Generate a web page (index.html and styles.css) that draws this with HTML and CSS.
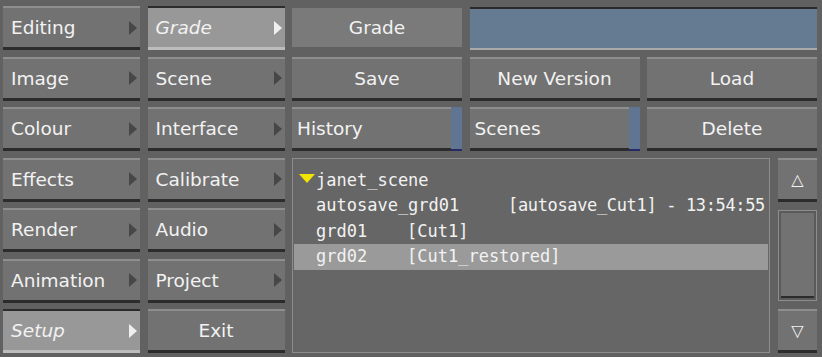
FILE: index.html
```html
<!DOCTYPE html>
<html lang="en">
<head>
    <meta charset="UTF-8">
    <title>Grade</title>
    <link rel="stylesheet" href="styles.css">
</head>
<body>

    <div class="panel">
        <!-- row 1 -->
        <div class="btn menu">Editing</div>
        <div class="btn menu active">Grade</div>
        <div class="label">Grade</div>
        <div class="field"></div>

        <!-- row 2 -->
        <div class="btn menu">Image</div>
        <div class="btn menu">Scene</div>
        <div class="btn center">Save</div>
        <div class="btn center">New Version</div>
        <div class="btn center">Load</div>

        <!-- row 3 -->
        <div class="btn menu">Colour</div>
        <div class="btn menu">Interface</div>
        <div class="btn toggle">History<span class="strip"></span></div>
        <div class="btn toggle">Scenes<span class="strip"></span></div>
        <div class="btn center">Delete</div>

        <!-- rows 4-7 -->
        <div class="btn menu">Effects</div>
        <div class="btn menu">Calibrate</div>

        <div class="browser">
            <div class="list">
                <div class="row"><span class="tri"></span>janet_scene</div>
                <div class="row item"><span class="c1">autosave_grd01</span><span class="c3">[autosave_Cut1] - 13:54:55</span></div>
                <div class="row item"><span class="c2">grd01</span><span>[Cut1]</span></div>
                <div class="row item sel"><span class="c2">grd02</span><span>[Cut1_restored]</span></div>
            </div>
            <div class="scroll">
                <div class="btn arrow">&#9651;</div>
                <div class="track"><div class="thumb"></div></div>
                <div class="btn arrow">&#9661;</div>
            </div>
        </div>

        <div class="btn menu">Render</div>
        <div class="btn menu">Audio</div>
        <div class="btn menu">Animation</div>
        <div class="btn menu">Project</div>
        <div class="btn menu active">Setup</div>
        <div class="btn center">Exit</div>
    </div>

</body>
</html>
```

FILE: styles.css
```css
body { margin: 0; background-color: #616161; font-family: "DejaVu Sans", sans-serif; color: #f2f2f2; font-size: 18.5px; }
.panel { display: grid; grid-template-columns: 137px 137px 170px 170px 170px; grid-auto-rows: 44px; column-gap: 7.5px; row-gap: 6.5px; padding: 6px 0 0 3px; width: 822px; height: 357px; box-sizing: border-box; }

.btn { display: flex; align-items: center; background-color: #727272; border-top: 2px solid #8e8e8e; border-bottom: 3px solid #2c2c2c; box-sizing: border-box; }
.btn.center { justify-content: center; }
.menu { padding-left: 8px; padding-right: 3px; }
.menu::after { content: ""; margin-left: auto; border-left: 8px solid #474747; border-top: 7px solid transparent; border-bottom: 7px solid transparent; }
.menu.active { background-color: #989898; border-top: 2px solid #2c2c2c; border-bottom: 3px solid #bdbdbd; font-style: italic; }
.menu.active::after { border-left-color: #f0f0f0; }

.label { display: flex; align-items: center; justify-content: center; background-color: #7a7a7a; margin: 2px 0 3px; }
.field { grid-column: span 2; background-color: #657b91; border-top: 2px solid #2a2a2a; border-bottom: 2px solid #a9a9a9; margin-top: 1px; }

.toggle { padding-left: 5px; }
.strip { margin-left: auto; align-self: stretch; width: 11px; background-color: #5f7591; border-bottom: 2px solid #242b66; margin-bottom: -3px; margin-top: -2px; }

.browser { grid-column: 3 / span 3; grid-row: 4 / span 4; display: flex; gap: 8px; }
.list { flex: 1; min-width: 0; overflow: hidden; border: 1px solid #8d8d8d; background-color: #666666; padding: 9px 1px 0; font-family: "DejaVu Sans Mono", monospace; font-size: 17px; }
.row { height: 25.5px; line-height: 25.5px; padding-left: 22px; position: relative; white-space: nowrap; }
.tri { position: absolute; left: 5px; top: 6px; border-top: 9px solid #f1e400; border-left: 8px solid transparent; border-right: 8px solid transparent; }
.item { display: flex; }
.c1 { width: 192px; }
.c2 { width: 91px; }
.c3 { letter-spacing: -0.35px; }
.sel { background-color: #9a9a9a; }

.scroll { width: 39px; flex: none; display: flex; flex-direction: column; gap: 8px; }
.arrow { height: 44px; justify-content: center; font-size: 16px; font-weight: bold; }
.track { flex: 1; border: 1px solid #8d8d8d; padding: 2px; background-color: #5a5a5a; }
.thumb { height: 100%; background-color: #727272; border-bottom: 2px solid #2c2c2c; box-sizing: border-box; }
```
